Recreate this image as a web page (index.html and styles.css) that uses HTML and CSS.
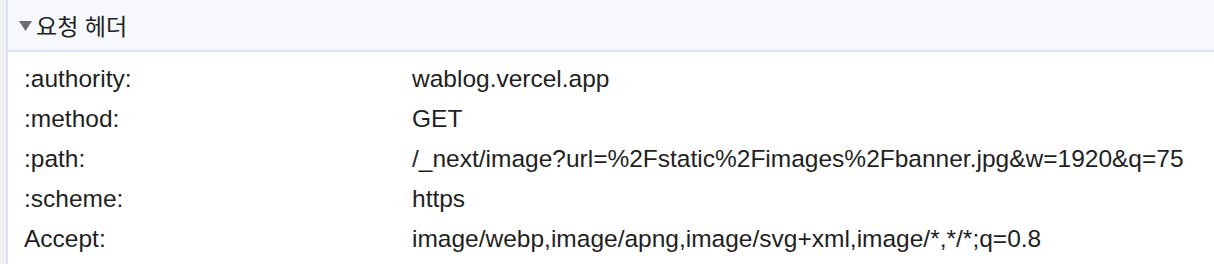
FILE: index.html
```html
<!DOCTYPE html>
<html lang="ko">
<head>
<meta charset="utf-8">
<title>요청 헤더</title>
<link rel="stylesheet" href="styles.css">
</head>
<body>
<div class="frame">
  <section class="panel">
    <div class="panel-header">
      <svg class="twisty" width="13" height="10" viewBox="0 0 13 10" aria-hidden="true"><polygon points="0,0 13,0 6.5,10" fill="#6b6b6b"/></svg>
      <span class="title">요청 헤더</span>
    </div>
    <div class="rows">
      <div class="row"><span class="key">:authority:</span><span class="val">wablog.vercel.app</span></div>
      <div class="row"><span class="key">:method:</span><span class="val">GET</span></div>
      <div class="row"><span class="key">:path:</span><span class="val">/_next/image?url=%2Fstatic%2Fimages%2Fbanner.jpg&amp;w=1920&amp;q=75</span></div>
      <div class="row"><span class="key">:scheme:</span><span class="val">https</span></div>
      <div class="row"><span class="key">Accept:</span><span class="val">image/webp,image/apng,image/svg+xml,image/*,*/*;q=0.8</span></div>
    </div>
  </section>
</div>
</body>
</html>
```
FILE: styles.css
```css
html, body {
  margin: 0;
  padding: 0;
  background: #ffffff;
}
body {
  font-family: "Liberation Sans", Arial, "Noto Sans CJK KR", sans-serif;
  color: #1f1f1f;
  width: 1214px;
  height: 264px;
  overflow: hidden;
}
.frame {
  display: flex;
  height: 264px;
  background: #f0f0f0;
  padding-left: 6px;
}
.panel {
  flex: 1;
  background: #ffffff;
  border-left: 2px solid #d6e3fb;
}
.panel-header {
  height: 50px;
  background: #f6f8fc;
  border-bottom: 2px solid #d6e3fb;
  display: flex;
  align-items: center;
  padding-left: 11px;
}
.twisty {
  flex: none;
  margin-right: 4px;
  margin-top: 1px;
}
.title {
  font-family: "Noto Sans CJK KR", sans-serif;
  font-size: 23px;
  color: #222222;
}
.rows {
  padding-top: 7px;
}
.row {
  display: grid;
  grid-template-columns: 388px 1fr;
  height: 40px;
  align-items: center;
  font-size: 24.5px;
  padding-left: 16px;
}
.key, .val {
  white-space: nowrap;
}
```
